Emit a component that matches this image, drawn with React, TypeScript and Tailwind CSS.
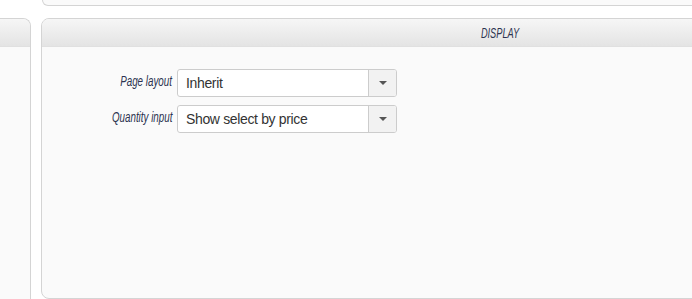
const fields = [
  { label: "Page layout", value: "Inherit" },
  { label: "Quantity input", value: "Show select by price" },
];

const Caret = () => (
  <svg width="8" height="4" viewBox="0 0 8 4" className="fill-[#555]">
    <path d="M0 0h8L4 4z" />
  </svg>
);

export default function App() {
  return (
    <div className="w-[692px] h-[299px] overflow-hidden bg-white font-['Liberation_Sans',Arial,sans-serif]">
      <div className="ml-[42px] w-[900px] h-[6px] border border-t-0 border-[#d4d4d4] rounded-bl-[8px] bg-[#fafafa]" />
      <div className="flex gap-[10px] mt-[12px]">
        <div className="ml-[-170px] w-[201px] h-[300px] shrink-0 border border-b-0 border-[#d4d4d4] rounded-tr-[8px] bg-[#fafafa] overflow-hidden">
          <div className="h-[28px] bg-gradient-to-b from-[#f6f6f6] to-[#e4e4e4] border-b border-[#e0e0e0]" />
        </div>
        <div className="w-[918px] h-[281px] shrink-0 border border-[#d4d4d4] rounded-[8px] bg-[#fafafa] overflow-hidden">
          <div className="h-[28px] bg-gradient-to-b from-[#f6f6f6] to-[#e4e4e4] border-b border-[#e0e0e0] flex items-center justify-center">
            <span className="inline-block italic text-[14px] leading-[16px] text-[#2c3350] scale-x-[0.66]">
              DISPLAY
            </span>
          </div>
          <div className="pt-[22px] flex flex-col gap-[8px]">
            {fields.map((f) => (
              <div key={f.label} className="flex gap-[5px]">
                <div className="w-[130px] text-right whitespace-nowrap">
                  <span className="inline-block origin-right scale-x-[0.7] italic text-[14px] leading-[16px] text-[#2c3350]">
                    {f.label}
                  </span>
                </div>
                <div className="flex w-[220px] h-[28px] border border-[#cccccc] rounded-[3px] bg-white overflow-hidden">
                  <div className="flex-1 pl-[8px] flex items-center text-[14px] tracking-[-0.35px] text-[#333]">
                    {f.value}
                  </div>
                  <div className="w-[28px] border-l border-[#cccccc] bg-[#f2f2f2] flex items-center justify-center">
                    <Caret />
                  </div>
                </div>
              </div>
            ))}
          </div>
        </div>
      </div>
    </div>
  );
}
